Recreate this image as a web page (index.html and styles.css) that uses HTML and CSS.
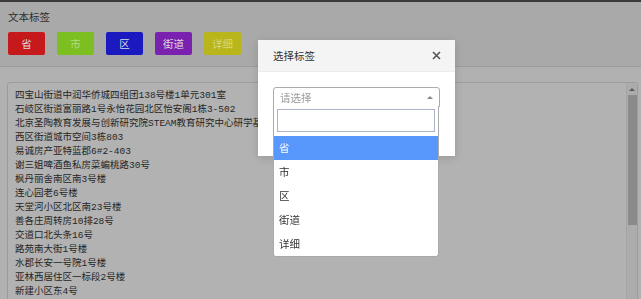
FILE: index.html
```html
<!DOCTYPE html>
<html lang="zh-CN">
<head>
    <meta charset="UTF-8">
    <title>文本标签</title>
    <link rel="stylesheet" href="styles.css">
</head>
<body>
    <div class="topbar"></div>

    <div class="tag-panel">
        <div class="tag-label">文本标签</div>
        <div class="tag-buttons">
            <button class="tag-btn tag-sheng">省</button>
            <button class="tag-btn tag-shi">市</button>
            <button class="tag-btn tag-qu">区</button>
            <button class="tag-btn tag-jiedao">街道</button>
            <button class="tag-btn tag-xiangxi">详细</button>
        </div>
    </div>

    <div class="editor">
        <textarea class="address-text" readonly>四宝山街道中润华侨城四组团138号楼1单元301室
石岐区街道富丽路1号永怡花园北区怡安阁1栋3-502
北京圣陶教育发展与创新研究院STEAM教育研究中心研学基地
西区街道城市空间3栋803
易诚房产亚特蓝郡6#2-403
谢三姐啤酒鱼私房菜蝙桃路30号
枫丹丽舍南区南3号楼
连心园老6号楼
天堂河小区北区南23号楼
善各庄周转房10排28号
交道口北头条16号
路苑南大街1号楼
水郡长安一号院1号楼
亚林西居住区一标段2号楼
新建小区东4号</textarea>
        <div class="scrollbar">
            <span class="scroll-up"></span>
            <span class="scroll-thumb"></span>
        </div>
    </div>

    <div class="modal">
        <div class="modal-header">
            <span class="modal-title">选择标签</span>
            <svg class="modal-close" width="9" height="9" viewBox="0 0 9 9">
                <path d="M1 1L8 8M8 1L1 8" stroke="#555" stroke-width="1.6" fill="none"/>
            </svg>
        </div>
        <div class="modal-body">
            <div class="select-box">
                <span class="select-placeholder">请选择</span>
                <span class="select-arrow"></span>
            </div>
            <div class="select-dropdown">
                <div class="select-search">
                    <input type="text">
                </div>
                <ul class="select-options">
                    <li class="active">省</li>
                    <li>市</li>
                    <li>区</li>
                    <li>街道</li>
                    <li>详细</li>
                </ul>
            </div>
        </div>
    </div>
</body>
</html>
```

FILE: styles.css
```css
* {
    margin: 0;
    padding: 0;
    box-sizing: border-box;
}

body {
    font-family: "Noto Sans CJK SC", sans-serif;
    font-size: 10.5px;
    background-color: #b1b1b1;
    color: #2e2e2e;
    overflow: hidden;
    height: 299px;
}

.topbar {
    height: 2px;
    background: #3a3a3a;
}

/* tag buttons */
.tag-panel {
    background: #a9a9a9;
    padding: 8px 8px 11px;
    border-bottom: 1px solid #9b9b9b;
}

.tag-label {
    line-height: 14px;
    margin-bottom: 8px;
}

.tag-buttons {
    display: flex;
    gap: 12px;
}

.tag-btn {
    width: 37px;
    height: 23px;
    border: none;
    border-radius: 2px;
    font-family: inherit;
    font-size: 10.5px;
    color: #dcdcdc;
}

.tag-sheng { background: #c6191c; }
.tag-shi { background: #7cbf20; color: #b6dc8a; }
.tag-qu { background: #1a1ac0; }
.tag-jiedao { background: #7b21b0; }
.tag-xiangxi { background: #b8b61a; color: #d8d67e; }

/* address text */
.editor {
    position: relative;
    padding: 15px 3px 0 7px;
}

.address-text {
    display: block;
    width: 100%;
    height: 220px;
    padding: 6px 16px 6px 7px;
    border: 1px solid #9c9c9c;
    border-radius: 3px;
    background: #b2b2b2;
    color: #262626;
    font-family: "Liberation Mono", "Noto Sans CJK SC", monospace;
    font-size: 9.5px;
    line-height: 14px;
    resize: none;
    overflow: hidden;
    white-space: pre;
}

.scrollbar {
    position: absolute;
    right: 4px;
    top: 16px;
    bottom: 0;
    width: 11px;
    display: flex;
    flex-direction: column;
    align-items: center;
    background: #acacac;
    border-left: 1px solid #a4a4a4;
}

.scroll-up {
    margin: 5px 0 4px;
    width: 0;
    height: 0;
    border-left: 3px solid transparent;
    border-right: 3px solid transparent;
    border-bottom: 3px solid #5a5a5a;
}

.scroll-thumb {
    width: 9px;
    height: 130px;
    background: #8a8a8a;
}

/* modal */
.modal {
    position: fixed;
    left: 258px;
    top: 40px;
    width: 197px;
    background: #fff;
    box-shadow: 0 2px 8px rgba(0, 0, 0, 0.15);
}

.modal-header {
    display: flex;
    justify-content: space-between;
    align-items: center;
    height: 32px;
    padding: 0 14px 0 15px;
    background: #f4f4f4;
    border-bottom: 1px solid #ececec;
}

.modal-title {
    color: #333;
}

.modal-body {
    position: relative;
    height: 84px;
    padding: 15px;
}

.select-box {
    display: flex;
    justify-content: space-between;
    align-items: center;
    height: 20px;
    padding: 0 6px;
    border: 1px solid #aaa;
    border-radius: 3px 3px 0 0;
}

.select-placeholder {
    color: #999;
}

.select-arrow {
    width: 0;
    height: 0;
    border-left: 3px solid transparent;
    border-right: 3px solid transparent;
    border-bottom: 3px solid #888;
}

.select-dropdown {
    position: absolute;
    left: 15px;
    top: 34px;
    width: 166px;
    background: #fff;
    border: 1px solid #aaa;
    border-top: none;
    border-radius: 0 0 3px 3px;
}

.select-search {
    padding: 3px 3px 4px;
}

.select-search input {
    display: block;
    width: 100%;
    height: 23px;
    border: 1px solid #a9b4c6;
    outline: none;
}

.select-options {
    list-style: none;
}

.select-options li {
    height: 24px;
    line-height: 24px;
    padding-left: 5px;
    color: #333;
}

.select-options li.active {
    background: #5897fb;
    color: #fff;
}
```
